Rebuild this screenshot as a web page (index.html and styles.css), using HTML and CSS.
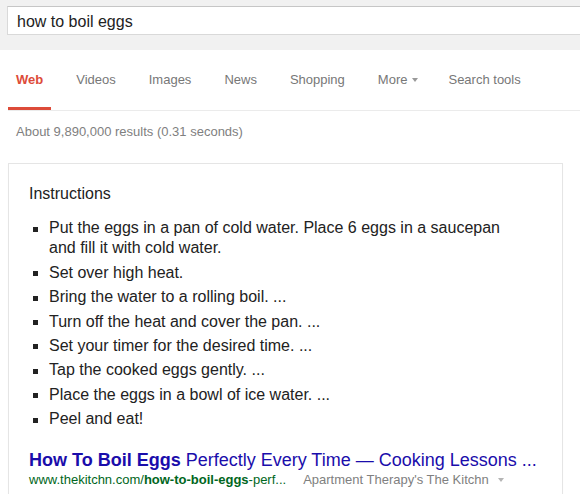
FILE: index.html
```
<!DOCTYPE html>
<html lang="en">
<head>
<meta charset="utf-8">
<title>how to boil eggs - Search</title>
<link rel="stylesheet" href="styles.css">
</head>
<body>
<div class="topbar">
  <div class="searchbox">how to boil eggs</div>
</div>
<nav class="tabs">
  <div class="tab active">Web</div>
  <div class="tab">Videos</div>
  <div class="tab">Images</div>
  <div class="tab">News</div>
  <div class="tab">Shopping</div>
  <div class="tab tab-more">More<span class="caret caret-more"></span></div>
  <div class="tab">Search tools</div>
</nav>
<div class="stats">About 9,890,000 results (0.31 seconds)</div>
<div class="card">
  <div class="heading">Instructions</div>
  <ul class="steps">
    <li>Put the eggs in a pan of cold water. Place 6 eggs in a saucepan and fill it with cold water.</li>
    <li>Set over high heat.</li>
    <li>Bring the water to a rolling boil. ...</li>
    <li>Turn off the heat and cover the pan. ...</li>
    <li>Set your timer for the desired time. ...</li>
    <li>Tap the cooked eggs gently. ...</li>
    <li>Place the eggs in a bowl of ice water. ...</li>
    <li>Peel and eat!</li>
  </ul>
  <div class="title"><b>How To Boil Eggs</b> Perfectly Every Time — Cooking Lessons ...</div>
  <div class="cite"><span class="url">www.thekitchn.com/<b>how-to-boil-eggs</b>-perf...</span><span class="source">Apartment Therapy's The Kitchn</span><span class="caret caret-source"></span></div>
</div>
</body>
</html>
```
FILE: styles.css
```
html, body {
  margin: 0;
  padding: 0;
  background: #fff;
  overflow: hidden;
}
body {
  font-family: "Liberation Sans", Arial, sans-serif;
  color: #222;
  width: 580px;
}
.topbar {
  background: #f1f1f1;
  height: 50px;
  box-sizing: border-box;
  padding: 6px 0 0 7px;
  overflow: hidden;
}
.searchbox {
  width: 620px;
  height: 29px;
  box-sizing: border-box;
  background: #fff;
  border: 1px solid #d9d9d9;
  border-top-color: #c6c6c6;
  padding: 2px 0 0 9px;
  font-size: 16px;
  line-height: 25px;
  color: #222;
}
.tabs {
  display: flex;
  gap: 17px;
  margin-left: 8px;
  height: 61px;
  box-sizing: border-box;
  border-bottom: 1px solid #ebebeb;
}
.tab {
  height: 60px;
  box-sizing: border-box;
  padding: 21.5px 8px 0;
  font-size: 13px;
  line-height: 16px;
  color: #777;
  border-bottom: 3px solid transparent;
  white-space: nowrap;
  display: flex;
  align-items: flex-start;
}
.tab.active {
  color: #dd4b39;
  font-weight: bold;
  border-bottom-color: #dd4b39;
}
.tab-more {
  padding-right: 5px;
}
.caret {
  display: inline-block;
  width: 0;
  height: 0;
  border-left: 3.5px solid transparent;
  border-right: 3.5px solid transparent;
  border-top: 4px solid #999;
}
.caret-more {
  margin: 6.5px 0 0 5px;
}
.stats {
  padding: 12.5px 0 0 16px;
  font-size: 13px;
  line-height: 16px;
  color: #808080;
  height: 52px;
  box-sizing: border-box;
}
.card {
  margin-left: 8px;
  width: 555px;
  box-sizing: border-box;
  border: 1px solid #e5e5e5;
  border-bottom: none;
  padding: 19.5px 0 20px 20px;
  box-shadow: 0 1px 1px rgba(0,0,0,0.04);
}
.heading {
  font-size: 16px;
  line-height: 20px;
}
.steps {
  list-style: none;
  margin: 14.8px 0 0;
  padding: 0;
  width: 487px;
  font-size: 16px;
  line-height: 20px;
}
.steps li {
  display: flex;
  align-items: flex-start;
}
.steps li + li {
  margin-top: 4.43px;
}
.steps li::before {
  content: "";
  flex: none;
  width: 5px;
  height: 5px;
  background: #222;
  margin: 8.5px 11px 0 4px;
}
.title {
  margin-top: 19.7px;
  font-size: 18px;
  line-height: 22px;
  color: #1a0dab;
  white-space: nowrap;
}
.cite {
  margin-top: 1px;
  font-size: 13px;
  line-height: 16px;
  display: flex;
  align-items: flex-start;
  white-space: nowrap;
}
.url {
  color: #006621;
}
.source {
  color: #808080;
  margin-left: 17px;
}
.caret-source {
  border-top-color: #b5b5b5;
  margin: 6px 0 0 9px;
}
```
